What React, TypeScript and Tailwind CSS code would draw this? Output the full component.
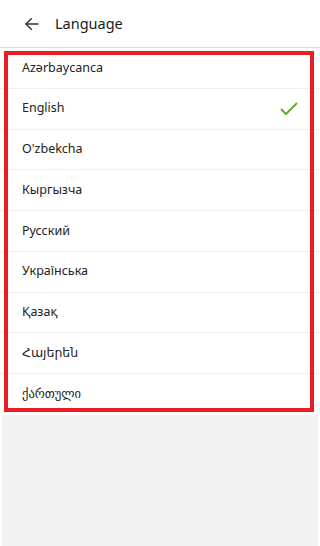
import React from "react";

const langs = [
  "Azərbaycanca",
  "English",
  "O'zbekcha",
  "Кыргызча",
  "Русский",
  "Українська",
  "Қазақ",
  "Հայերեն",
  "ქართული",
];

export default function App() {
  return (
    <div
      className="w-[320px] h-[546px] flex flex-col bg-white overflow-hidden"
      style={{ fontFamily: '"Noto Sans", "DejaVu Sans", sans-serif' }}
    >
      <div className="h-[48px] shrink-0 flex items-center border-b border-[#dcdcdc] bg-white">
        <svg width="18" height="18" viewBox="0 0 24 24" className="ml-[23px]" fill="none" stroke="#333" strokeWidth="2" strokeLinecap="round" strokeLinejoin="round">
          <path d="M20 12H4" />
          <path d="M11 5l-7 7 7 7" />
        </svg>
        <span className="ml-[14px] text-[14.5px] text-[#1a1a1a]">Language</span>
      </div>
      <div className="relative shrink-0 bg-white">
        {langs.map((l, i) => (
          <div
            key={l}
            className={`h-[40.75px] flex items-center justify-between pl-[22px] pr-[22px] text-[12.5px] text-[#222] ${i < langs.length - 1 ? "border-b border-[#efefef]" : ""}`}
          >
            <span>{l}</span>
            {i === 1 && (
              <svg width="18" height="14" viewBox="0 0 18 14" fill="none" stroke="#5aaa1e" strokeWidth="1.8" strokeLinecap="round" strokeLinejoin="round">
                <path d="M1.5 7.5l4.5 4.5L16.5 1.5" />
              </svg>
            )}
          </div>
        ))}
        <div className="absolute left-[4px] top-[3px] w-[310px] h-[361px] border-4 border-[#ec1c24] pointer-events-none" />
      </div>
      <div className="flex-1 bg-[#f2f2f2] border-x-2 border-white" />
    </div>
  );
}
